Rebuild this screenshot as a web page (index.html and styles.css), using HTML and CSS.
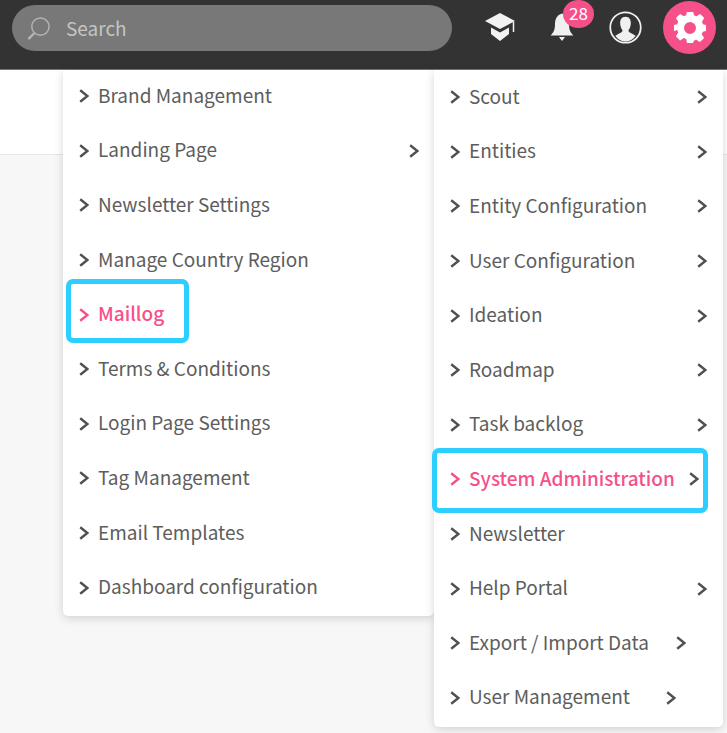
FILE: index.html
```html
<!DOCTYPE html>
<html lang="en">
<head>
<meta charset="utf-8">
<title>Admin menu</title>
<link rel="stylesheet" href="styles.css">
</head>
<body>
<svg class="defs" width="0" height="0" aria-hidden="true"><defs>
<symbol id="chev" viewBox="0 0 10 14"><path d="M1.2 1.300 8.400 7 1.200 12.700" fill="none" stroke="currentColor" stroke-width="2.400"/></symbol>
</defs></svg>
<header class="topbar">
  <div class="search">
    <svg class="search-icon" viewBox="0 0 26 26"><circle cx="15" cy="11" r="9" fill="none" stroke="#b5b5b5" stroke-width="1.5"/><path d="M8.5 18 2.5 24" stroke="#b5b5b5" stroke-width="2.4" fill="none"/></svg>
    <span class="search-text">Search</span>
  </div>
  <div class="actions">
    <svg class="icon-cap" viewBox="0 0 32 29"><path d="M16 0 31 8 16 16 1 8Z" fill="#f2f2f2"/><path d="M7 14.5 16 19.5 25 14.5V21L16 28 7 21Z" fill="#f2f2f2"/><path d="M29.500 9V19" stroke="#f2f2f2" stroke-width="1.500"/></svg>
    <div class="bell-wrap">
      <svg class="icon-bell" viewBox="0 0 24 30"><path d="M12 1.500C7 3 5 7 5 12 5 18 3.500 20.500 0.500 23.500H23.500C20.500 20.500 19 18 19 12 19 7 17 3 12 1.500Z" fill="#f0f0f0"/><path d="M9 25H15L12 29Z" fill="#f0f0f0"/></svg>
      <span class="badge">28</span>
    </div>
    <svg class="icon-user" viewBox="0 0 34 34"><circle cx="17" cy="17" r="15.700" fill="none" stroke="#f0f0f0" stroke-width="1.800"/><path d="M17 6C13 6 11.500 9 11.500 12.500 11.500 16 13 18.500 14 20 14 22 10 23 6.500 25.500 9 29.500 13 31.500 17 31.500 21 31.500 25 29.500 27.500 25.500 24 23 20 22 20 20 21 18.500 22.500 16 22.500 12.500 22.500 9 21 6 17 6Z" fill="#f0f0f0"/></svg>
    <div class="gear-btn">
      <svg class="icon-gear" viewBox="0 0 32 32"><path fill="#fff" fill-rule="evenodd" d="M13 1h6l1 4.200 2.400 1 3.700-2.300 4.200 4.200L28 11.800l1 2.400 3 .8v6l-3.200.8-1 2.400 2.300 3.700-4.200 4.200-3.700-2.300-2.400 1L19 33h-6l-.8-3.900-2.400-1-3.700 2.300-4.200-4.200 2.300-3.700-1-2.400L0 21v-6l3.200-.8 1-2.400-2.300-3.700 4.200-4.200 3.700 2.300 2.400-1Z M16 12a6 6 0 1 0 0 12 6 6 0 0 0 0-12Z" transform="translate(0 -2)"/></svg>
    </div>
  </div>
</header>
<div class="subbar"></div>

<nav class="menu menu-left">
  <a class="item"><svg class="chev"><use href="#chev"/></svg><span>Brand Management</span></a>
  <a class="item"><svg class="chev"><use href="#chev"/></svg><span>Landing Page</span><svg class="chev end"><use href="#chev"/></svg></a>
  <a class="item"><svg class="chev"><use href="#chev"/></svg><span>Newsletter Settings</span></a>
  <a class="item"><svg class="chev"><use href="#chev"/></svg><span>Manage Country Region</span></a>
  <a class="item active hl-mail"><svg class="chev"><use href="#chev"/></svg><span>Maillog</span></a>
  <a class="item"><svg class="chev"><use href="#chev"/></svg><span>Terms &amp; Conditions</span></a>
  <a class="item"><svg class="chev"><use href="#chev"/></svg><span>Login Page Settings</span></a>
  <a class="item"><svg class="chev"><use href="#chev"/></svg><span>Tag Management</span></a>
  <a class="item"><svg class="chev"><use href="#chev"/></svg><span>Email Templates</span></a>
  <a class="item"><svg class="chev"><use href="#chev"/></svg><span>Dashboard configuration</span></a>
</nav>

<nav class="menu menu-right">
  <a class="item"><svg class="chev"><use href="#chev"/></svg><span>Scout</span><svg class="chev end"><use href="#chev"/></svg></a>
  <a class="item"><svg class="chev"><use href="#chev"/></svg><span>Entities</span><svg class="chev end"><use href="#chev"/></svg></a>
  <a class="item"><svg class="chev"><use href="#chev"/></svg><span>Entity Configuration</span><svg class="chev end"><use href="#chev"/></svg></a>
  <a class="item"><svg class="chev"><use href="#chev"/></svg><span>User Configuration</span><svg class="chev end"><use href="#chev"/></svg></a>
  <a class="item"><svg class="chev"><use href="#chev"/></svg><span>Ideation</span><svg class="chev end"><use href="#chev"/></svg></a>
  <a class="item"><svg class="chev"><use href="#chev"/></svg><span>Roadmap</span><svg class="chev end"><use href="#chev"/></svg></a>
  <a class="item"><svg class="chev"><use href="#chev"/></svg><span>Task backlog</span><svg class="chev end"><use href="#chev"/></svg></a>
  <a class="item active hl-sys"><svg class="chev"><use href="#chev"/></svg><span>System Administration</span><svg class="chev tail-sys"><use href="#chev"/></svg></a>
  <a class="item"><svg class="chev"><use href="#chev"/></svg><span>Newsletter</span></a>
  <a class="item"><svg class="chev"><use href="#chev"/></svg><span>Help Portal</span><svg class="chev end"><use href="#chev"/></svg></a>
  <a class="item"><svg class="chev"><use href="#chev"/></svg><span>Export / Import Data</span><svg class="chev tail-export"><use href="#chev"/></svg></a>
  <a class="item"><svg class="chev"><use href="#chev"/></svg><span>User Management</span><svg class="chev tail-user"><use href="#chev"/></svg></a>
</nav>
</body>
</html>
```
FILE: styles.css
```css
*, *::after { box-sizing: border-box; }
html, body { margin: 0; height: 733px; overflow: hidden; }
body {
  position: relative;
  width: 727px;
  background: #f7f7f7;
  font-family: "Noto Sans CJK JP", "Noto Sans", sans-serif;
}
.defs { position: absolute; }
.topbar {
  height: 70px;
  background: #333;
  border-bottom: 1px solid #777;
  display: flex;
  align-items: flex-start;
}
.search {
  margin: 5px 0 0 12px;
  width: 440px;
  height: 46px;
  border-radius: 23px;
  background: #787878;
  display: flex;
  align-items: center;
  padding-left: 14px;
}
.search-icon { width: 25px; height: 25px; }
.search-text { margin-left: 15px; color: #c4c4c4; font-size: 19px; line-height: 24px; }
.actions { display: flex; align-items: center; height: 54px; margin-left: 32px; }
.icon-cap { width: 32px; height: 29px; margin-top: 1px; }
.bell-wrap { position: relative; width: 24px; height: 30px; margin-left: 34px; }
.icon-bell { width: 24px; height: 30px; display: block; }
.badge {
  position: absolute;
  left: 13px;
  top: -12px;
  width: 31px;
  height: 28px;
  border-radius: 50%;
  background: #f6508a;
  color: #fff;
  font-size: 17px;
  line-height: 26px;
  text-align: center;
}
.icon-user { width: 33px; height: 33px; margin-left: 35px; }
.gear-btn {
  width: 53px;
  height: 53px;
  margin: 1px 0 0 21px;
  border-radius: 50%;
  background: #f6508a;
  display: flex;
  align-items: center;
  justify-content: center;
}
.icon-gear { width: 32px; height: 32px; }
.subbar { height: 85px; background: #fff; border-bottom: 1px solid #e6e6e6; }
.menu {
  position: absolute;
  top: 70px;
  background: #fff;
  border-radius: 0 0 5px 5px;
  box-shadow: 0 2px 10px rgba(0, 0, 0, .16);
  padding-left: 16px;
  padding-right: 15px;
}
.menu-left { left: 63px; width: 371px; height: 546px; }
.menu-right { left: 434px; width: 289px; height: 657px; }
.item {
  position: relative;
  display: flex;
  align-items: center;
  height: 54.600px;
  padding-bottom: 6px;
  color: #5d5d5d;
  font-size: 19px;
  white-space: nowrap;
}
.menu-right .item { padding-bottom: 4px; }
.chev { width: 10px; height: 14px; flex: none; margin: 4px 9px 0 0; color: #505050; }
.menu-right .end, .end { margin-left: auto; margin-right: 0; }
.menu-right .end { margin-right: 1px; }
.menu-right .tail-sys { margin-left: 14px; margin-right: 0; }
.menu-right .tail-export { margin-left: 27px; margin-right: 0; }
.menu-right .tail-user { margin-left: 36px; margin-right: 0; }
.active { color: #f6508a; font-weight: 500; }
.active > .chev:first-child { color: #f6508a; }
.hl-mail::after, .hl-sys::after {
  content: "";
  position: absolute;
  border: 5px solid #2ccfff;
  border-radius: 7px;
}
.hl-mail::after { left: -13px; top: -9px; width: 123px; height: 64px; }
.hl-sys::after { left: -18px; top: -4px; width: 276px; height: 65px; }
```
